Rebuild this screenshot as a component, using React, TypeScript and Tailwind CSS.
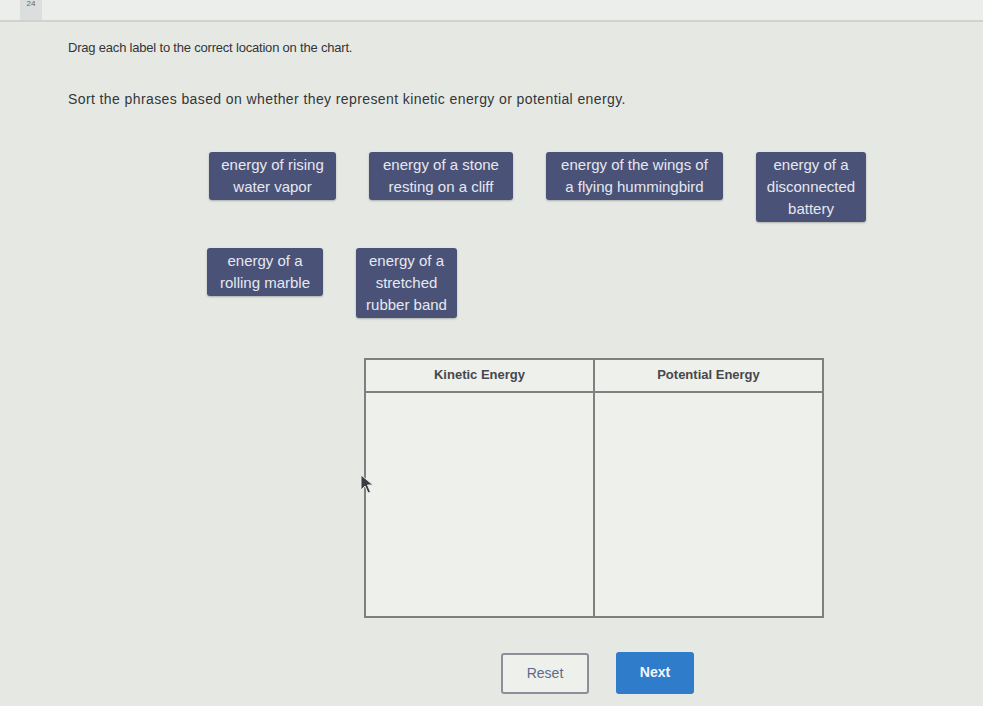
import React from 'react';

const labelsTop = [
  { lines: ['energy of rising', 'water vapor'], w: 'w-[127px]' },
  { lines: ['energy of a stone', 'resting on a cliff'], w: 'w-[144px]' },
  { lines: ['energy of the wings of', 'a flying hummingbird'], w: 'w-[177px]' },
  { lines: ['energy of a', 'disconnected', 'battery'], w: 'w-[110px]' },
];

const labelsBottom = [
  { lines: ['energy of a', 'rolling marble'], w: 'w-[116px]' },
  { lines: ['energy of a', 'stretched', 'rubber band'], w: 'w-[101px]' },
];

function Label({ lines, w }: { lines: string[]; w: string }) {
  return (
    <div
      className={`${w} rounded-[3px] bg-[#4a5278] px-[2px] py-[2px] text-center text-[15px] leading-[22px] text-[#e6e8f0] shadow-[0_1px_2px_rgba(0,0,0,0.25)]`}
    >
      {lines.map((l) => (
        <div key={l} className="whitespace-nowrap">{l}</div>
      ))}
    </div>
  );
}

function Cursor() {
  return (
    <svg className="absolute left-[360px] top-[474px]" width="16" height="22" viewBox="0 0 16 22">
      <path d="M1 1 L1 16 L5 12 L8 19 L10.5 18 L7.5 11 L13 11 Z" fill="#3a3d42" stroke="#e8e8e8" strokeWidth="1" />
    </svg>
  );
}

export default function App() {
  return (
    <div
      className="relative h-[706px] w-[983px] overflow-hidden bg-[#e6e9e3] text-[#2d2f33]"
      style={{ fontFamily: '"Liberation Sans", Arial, sans-serif' }}
    >
      {/* top bar */}
      <div className="flex h-[22px] items-end border-b-2 border-[#cfd2cf] bg-[#eceeec]">
        <div className="ml-[20px] flex h-[22px] w-[22px] items-start justify-center bg-[#dcdedd] text-[8px] text-[#666]">24</div>
      </div>

      <div className="pl-[68px] pt-[16px]">
        <p className="text-[13px] tracking-[-0.2px] text-[#33353a]">Drag each label to the correct location on the chart.</p>
        <p className="mt-[31px] text-[14px] tracking-[0.4px] text-[#33353a]">
          Sort the phrases based on whether they represent kinetic energy or potential energy.
        </p>
      </div>

      {/* draggable labels */}
      <div className="mt-[42px] flex items-start gap-[33px] pl-[209px]">
        {labelsTop.map((l) => (
          <Label key={l.lines[0] + l.lines[1]} {...l} />
        ))}
      </div>
      <div className="mt-[26px] flex items-start gap-[33px] pl-[207px]">
        {labelsBottom.map((l) => (
          <Label key={l.lines[1]} {...l} />
        ))}
      </div>

      {/* chart */}
      <div className="ml-[364px] mt-[40px] w-[460px] border-2 border-[#7d8080] bg-[#eef0eb]">
        <div className="grid h-[33px] grid-cols-[229px_1fr] border-b-2 border-[#7d8080]">
          <div className="flex items-center justify-center border-r-2 border-[#7d8080] text-[13px] font-bold text-[#46484d]">
            Kinetic Energy
          </div>
          <div className="flex items-center justify-center text-[13px] font-bold text-[#46484d]">Potential Energy</div>
        </div>
        <div className="grid h-[223px] grid-cols-[229px_1fr]">
          <div className="border-r-2 border-[#7d8080]" />
          <div />
        </div>
      </div>

      {/* buttons */}
      <div className="mt-[35px] flex items-start gap-[27px] pl-[501px]">
        <button className="h-[41px] w-[88px] rounded-[3px] border-2 border-[#8a8f99] bg-[#eef0ec] text-[14px] text-[#5c6b8a]">
          Reset
        </button>
        <button className="-mt-[1px] h-[42px] w-[78px] rounded-[3px] bg-[#2f7ccb] text-[14px] font-bold text-[#f2f6fb]">
          Next
        </button>
      </div>

      <Cursor />
    </div>
  );
}
